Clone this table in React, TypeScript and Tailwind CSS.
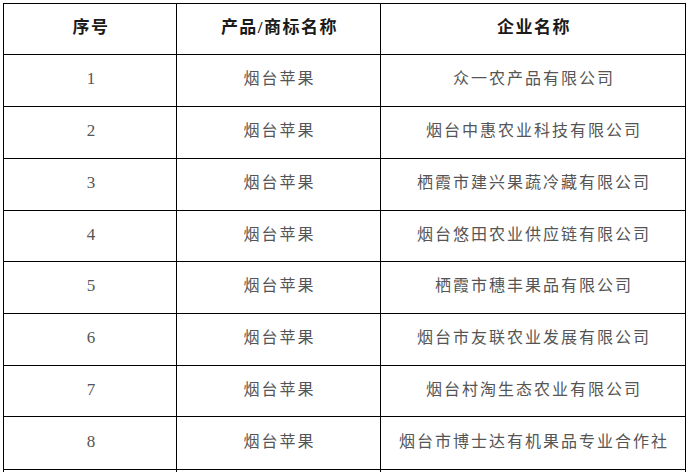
import React from "react";

interface Row {
  no: string;
  product: string;
  company: string;
  h: string;
}

const rows: Row[] = [
  { no: "1", product: "烟台苹果", company: "众一农产品有限公司", h: "h-[52px]" },
  { no: "2", product: "烟台苹果", company: "烟台中惠农业科技有限公司", h: "h-[52px]" },
  { no: "3", product: "烟台苹果", company: "栖霞市建兴果蔬冷藏有限公司", h: "h-[52px]" },
  { no: "4", product: "烟台苹果", company: "烟台悠田农业供应链有限公司", h: "h-[51px]" },
  { no: "5", product: "烟台苹果", company: "栖霞市穗丰果品有限公司", h: "h-[52px]" },
  { no: "6", product: "烟台苹果", company: "烟台市友联农业发展有限公司", h: "h-[52px]" },
  { no: "7", product: "烟台苹果", company: "烟台村淘生态农业有限公司", h: "h-[51px]" },
  { no: "8", product: "烟台苹果", company: "烟台市博士达有机果品专业合作社", h: "h-[53px]" },
  { no: "", product: "", company: "", h: "h-[52px]" },
];

const cell = "flex items-center justify-center border-r border-b border-black pl-[2px]";

const App: React.FC = () => {
  return (
    <div className="h-[472px] w-[689px] overflow-hidden bg-white pl-[3px] pt-[3px] font-['Liberation_Serif','Noto_Sans_CJK_SC',serif]">
      <div className="w-[683px] border-l border-t border-black">
        {/* header */}
        <div className="flex h-[51px] text-[17px] font-bold tracking-[1.5px] text-[#1a1a1a]">
          <div className={`${cell} w-[173px] pb-[2px]`}>序号</div>
          <div className={`${cell} w-[204px] pb-[2px]`}>产品/商标名称</div>
          <div className={`${cell} w-[305px] pb-[2px]`}>企业名称</div>
        </div>

        {rows.map((r, i) => (
          <div key={i} className={`flex ${r.h} text-[16px] tracking-[2px] text-[#555]`}>
            <div className={`${cell} w-[173px] pb-[3px] text-[17px] tracking-normal`}>{r.no}</div>
            <div className={`${cell} w-[204px] pb-[3px]`}>{r.product}</div>
            <div className={`${cell} w-[305px] pb-[3px]`}>{r.company}</div>
          </div>
        ))}
      </div>
    </div>
  );
};

export default App;
